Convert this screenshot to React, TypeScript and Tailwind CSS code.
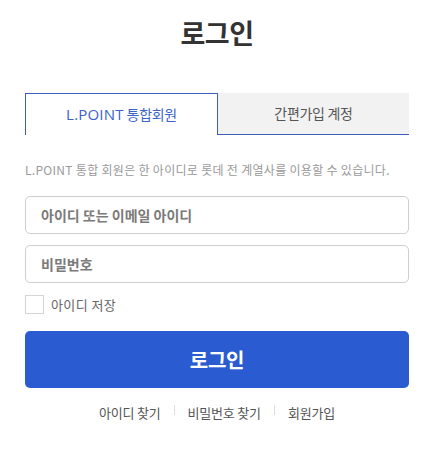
import { useState } from "react";

const font = {
  fontFamily: '"Noto Sans CJK KR", "Noto Sans", sans-serif',
};

const links = ["아이디 찾기", "비밀번호 찾기", "회원가입"];

export default function App() {
  const [tab, setTab] = useState(0);
  const [saveId, setSaveId] = useState(false);

  return (
    <div className="w-[440px] h-[450px] bg-white" style={font}>
      <div className="w-[384px] ml-[25px] pt-[14px]">
        <h1 className="text-center text-[27px] font-bold text-[#333] leading-[38px] tracking-[-0.5px]">
          로그인
        </h1>

        {/* tabs */}
        <div className="flex mt-[41px] h-[42px]">
          <button
            onClick={() => setTab(0)}
            className="flex-1 border border-b-0 border-[#3d5fb8] bg-white text-[14px] text-[#3a62c9] tracking-[-0.3px]"
          >
            <span className="font-['Open_Sans',sans-serif] text-[15px] tracking-[0.2px]">L.POINT</span> 통합회원
          </button>
          <button
            onClick={() => setTab(1)}
            className="flex-1 bg-[#f2f2f2] border-b border-[#3d5fb8] text-[14px] text-[#555] tracking-[-0.3px]"
          >
            간편가입 계정
          </button>
        </div>

        <p className="mt-[27px] text-[12px] leading-[16px] text-[#999] tracking-[0.3px]">
          L.POINT 통합 회원은 한 아이디로 롯데 전 계열사를 이용할 수 있습니다.
        </p>

        <div className="mt-[18px] flex flex-col gap-[11px]">
          <input
            type="text"
            placeholder="아이디 또는 이메일 아이디"
            className="h-[38px] w-full rounded-[5px] border border-[#cfcfcf] px-[15px] text-[14px] font-semibold placeholder:text-[#7a7a7a] outline-none"
          />
          <input
            type="password"
            placeholder="비밀번호"
            className="h-[38px] w-full rounded-[5px] border border-[#cfcfcf] px-[15px] text-[14px] font-semibold placeholder:text-[#7a7a7a] outline-none"
          />
        </div>

        <label className="mt-[12px] flex items-center gap-[7px] cursor-pointer">
          <span
            onClick={() => setSaveId(!saveId)}
            className={`w-[19px] h-[19px] border border-[#d4d4d4] ${saveId ? "bg-[#2a5bd0]" : "bg-white"}`}
          />
          <span className="text-[13px] text-[#666] leading-[19px] tracking-[0.4px]">아이디 저장</span>
        </label>

        <button className="mt-[17px] w-full h-[57px] rounded-[5px] bg-[#2a5bd0] text-white text-[20px] font-bold tracking-[-0.3px]">
          로그인
        </button>

        <div className="mt-[15px] flex justify-center items-center text-[13px] text-[#555] tracking-[-0.2px]">
          {links.map((l, i) => (
            <div key={l} className="flex items-center">
              {i > 0 && <span className="mx-[13px] w-px h-[10px] bg-[#ddd] -mt-[6px]" />}
              <a href="#">{l}</a>
            </div>
          ))}
        </div>
      </div>
    </div>
  );
}
